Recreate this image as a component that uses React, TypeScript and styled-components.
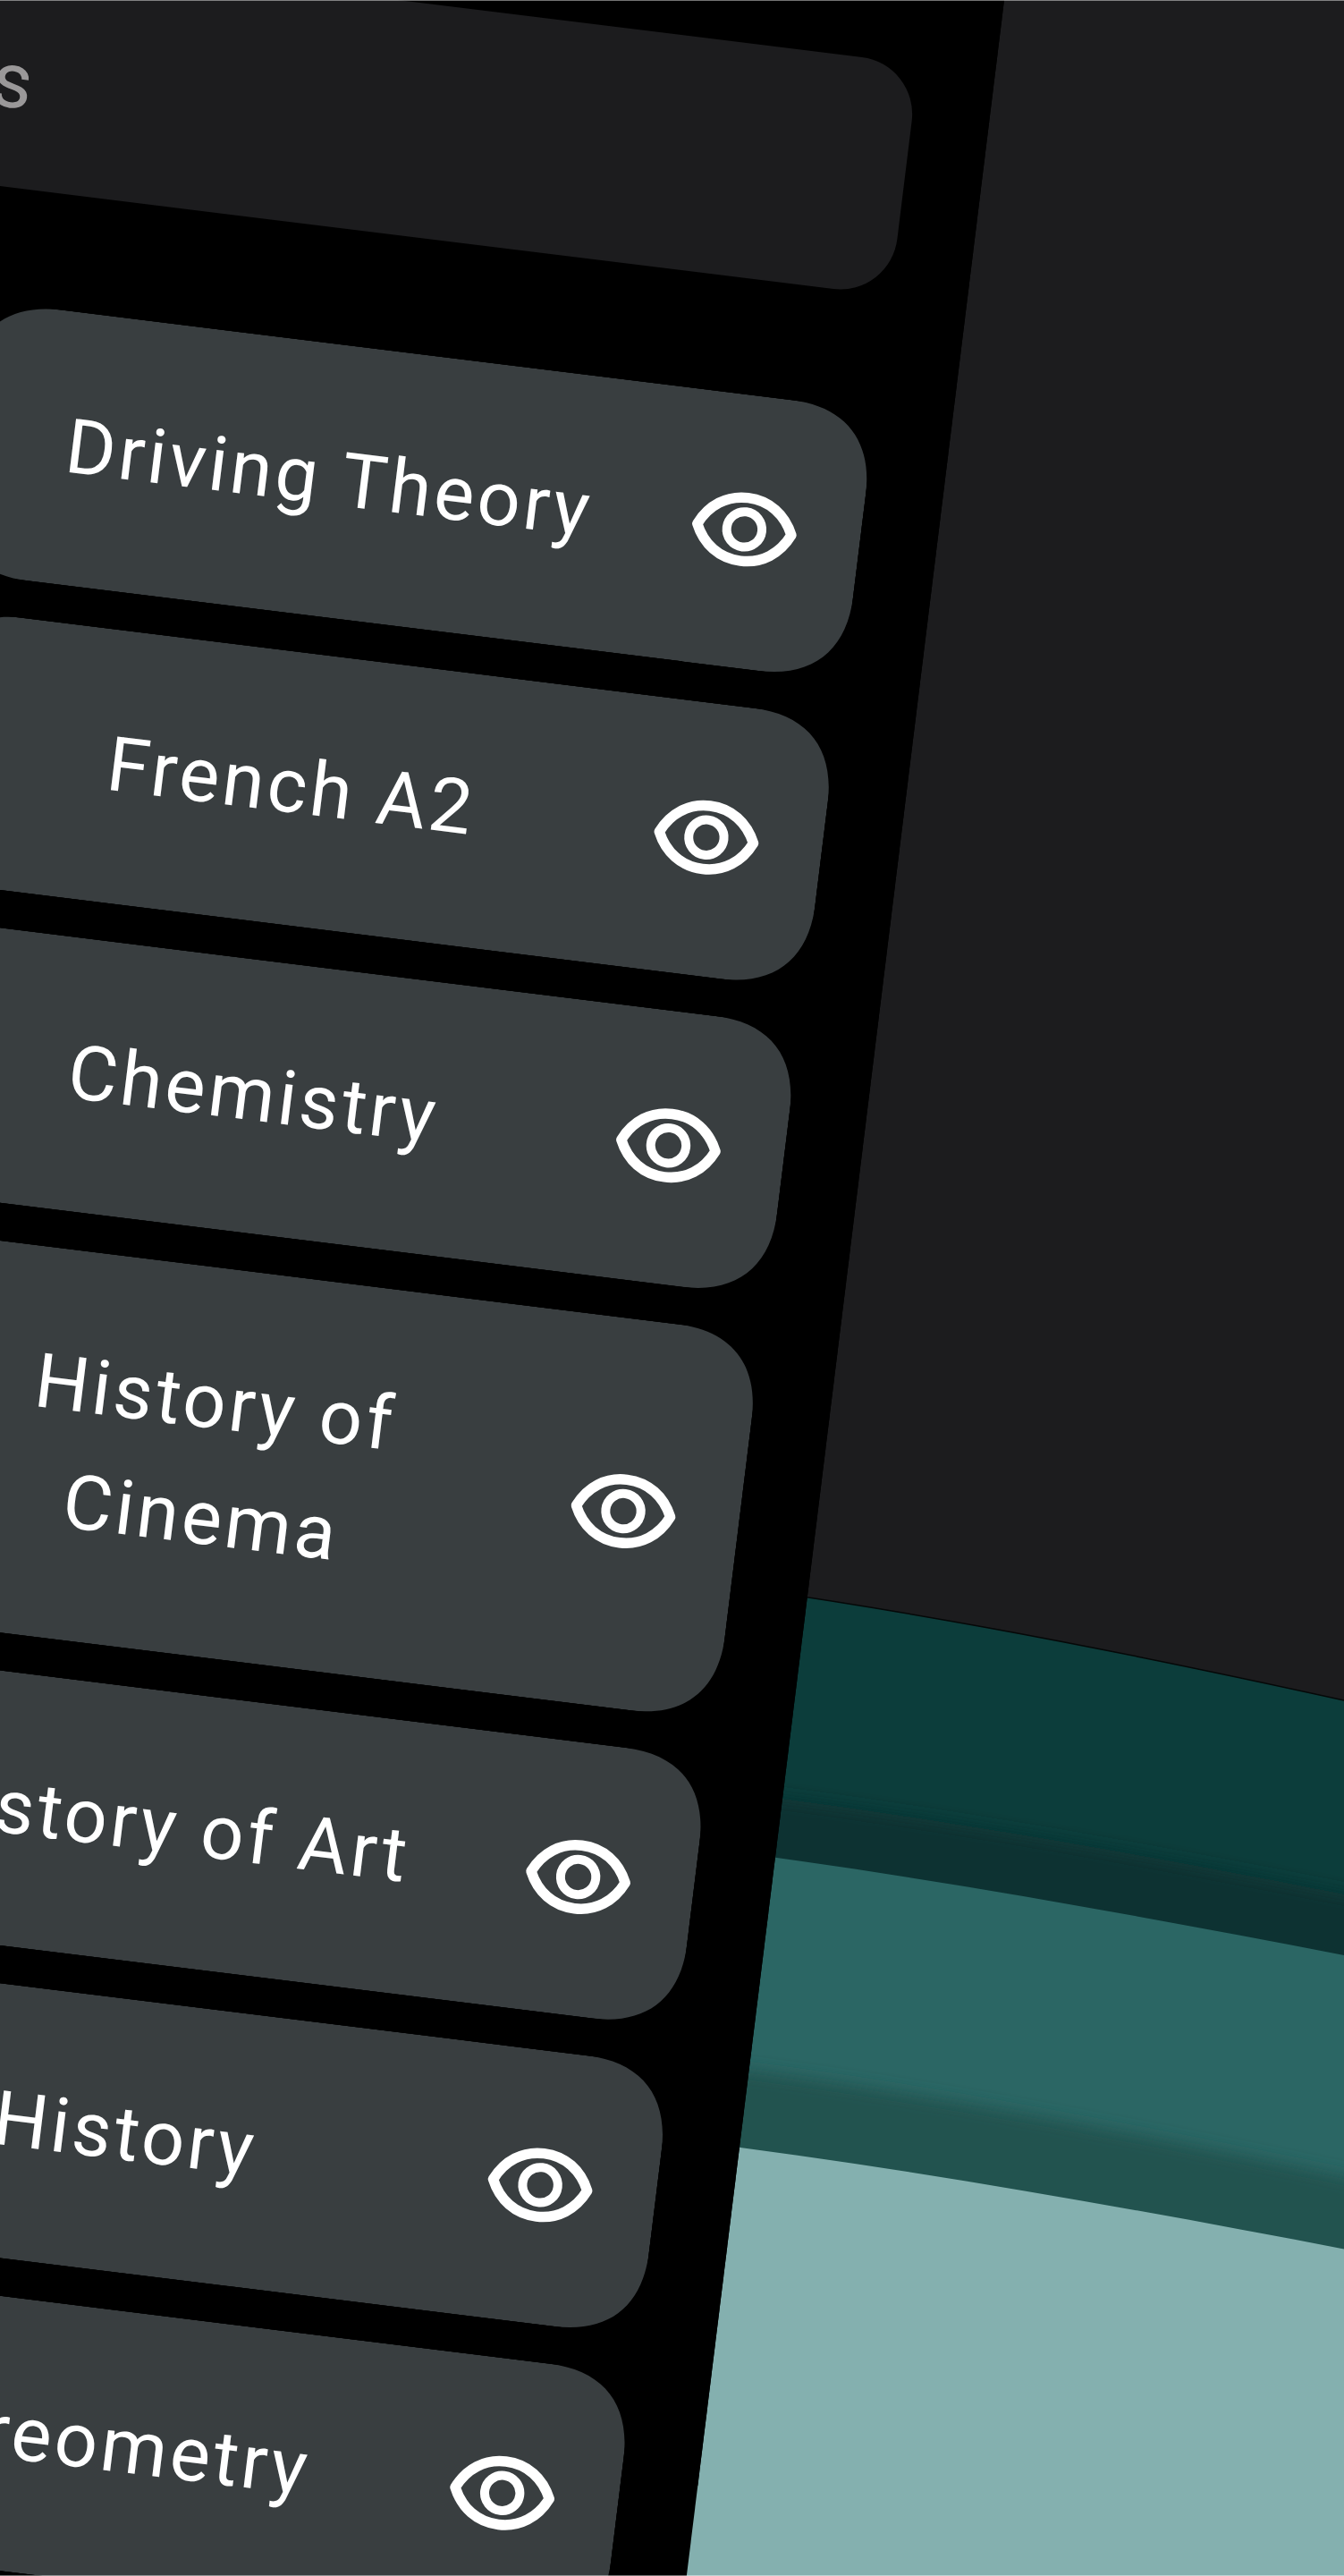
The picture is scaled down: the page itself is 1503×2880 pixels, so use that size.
import React from "react";
import styled, { createGlobalStyle } from "styled-components";

const GlobalStyle = createGlobalStyle`
  * {
    box-sizing: border-box;
  }
  body {
    margin: 0;
    background-color: #1c1c1e;
  }
`;

const Screen = styled.div`
  position: relative;
  width: 1503px;
  height: 2880px;
  overflow: hidden;
  background-color: #1c1c1e;
  font-family: Roboto, "Noto Sans", sans-serif;

  &::after {
    content: "";
    position: absolute;
    inset: 0;
    border: solid rgba(255, 255, 255, 0.45);
    border-width: 1px 0;
  }
`;

const Waves = styled.svg`
  position: absolute;
  top: 0;
  left: 0;
`;

// the phone mockup is tilted, everything inside is laid out straight
const Phone = styled.div`
  position: absolute;
  top: 0;
  right: 380px;
  width: 1240px;
  height: 3200px;
  padding: 83px 86px 0 0;
  display: flex;
  flex-direction: column;
  align-items: flex-end;
  background-color: #000000;
  transform: rotate(7.03deg);
  transform-origin: 100% 0;
  box-shadow: 0 -400px 0 #000000;
`;

const SearchField = styled.div`
  display: flex;
  align-items: center;
  width: 1100px;
  height: 261px;
  flex-shrink: 0;
  margin-bottom: 129px;
  padding: 22px 0 0 0;
  border-radius: 64px;
  background-color: #1c1c1e;
`;

const Placeholder = styled.span`
  width: 119px;
  display: flex;
  justify-content: flex-end;
  white-space: nowrap;
  font-size: 87px;
  color: #9a9899;
`;

const List = styled.div`
  display: flex;
  flex-direction: column;
  gap: 42px;
`;

const CardShape = styled.div<{ $tall?: boolean }>`
  display: flex;
  align-items: center;
  justify-content: space-between;
  flex-shrink: 0;
  width: 1013px;
  height: ${({ $tall }) => ($tall ? 435 : 305)}px;
  padding: 0 71px 6px 65px;
  background-color: #393e40;
`;

const Label = styled.div`
  width: 701px;
  text-align: center;
  font-size: 85px;
  line-height: 130px;
  letter-spacing: 3.6px;
  color: #ffffff;
`;

const EyeIcon = styled.svg`
  width: 118px;
  height: 82px;
  flex-shrink: 0;
  overflow: visible;
`;

// rounded rectangle with smoothed corners
const squircle = (w: number, h: number, r: number) => {
  const a = r * 0.36;
  return [
    `M${r} 0H${w - r}C${w - a} 0 ${w} ${a} ${w} ${r}`,
    `V${h - r}C${w} ${h - a} ${w - a} ${h} ${w - r} ${h}`,
    `H${r}C${a} ${h} 0 ${h - a} 0 ${h - r}`,
    `V${r}C0 ${a} ${a} 0 ${r} 0Z`,
  ].join("");
};

type SubjectCardProps = {
  name: string;
  tall?: boolean;
};

function SubjectCard({ name, tall }: SubjectCardProps) {
  return (
    <CardShape
      $tall={tall}
      style={{ clipPath: `path("${squircle(1013, tall ? 435 : 305, 95)}")` }}
    >
      <Label>{name}</Label>
      <EyeIcon viewBox="0 0 118 82" fill="none" stroke="#ffffff">
        <path
          d="M6 41C16 19 35 5.5 59 5.5S102 19 112 41C102 63 83 76.5 59 76.5S16 63 6 41Z"
          strokeWidth="11.5"
          strokeLinejoin="round"
        />
        <circle cx="59" cy="41" r="19.7" strokeWidth="10" />
      </EyeIcon>
    </CardShape>
  );
}

const subjects: SubjectCardProps[] = [
  { name: "Driving Theory" },
  { name: "French A2" },
  { name: "Chemistry" },
  { name: "History of Cinema", tall: true },
  { name: "History of Art" },
  { name: "History" },
  { name: "Stereometry" },
];

const EDGE_BACK = "M700 1758C970 1790 1240 1843 1503 1901";
const EDGE_MIDDLE = "M700 2055C970 2087 1240 2135 1503 2186";
const EDGE_FRONT = "M700 2385C970 2416 1240 2464 1503 2514.5";
const CLOSE = "V2900H700Z";

export default function App() {
  return (
    <>
      <GlobalStyle />
      <Screen>
        <Waves width="1503" height="2880" viewBox="0 0 1503 2880">
          <defs>
            <filter id="soft" x="-10%" y="-10%" width="120%" height="120%">
              <feGaussianBlur stdDeviation="9" />
            </filter>
            <clipPath id="back">
              <path d={EDGE_BACK + CLOSE} />
            </clipPath>
            <clipPath id="middle">
              <path d={EDGE_MIDDLE + CLOSE} />
            </clipPath>
          </defs>
          <path d={EDGE_BACK + CLOSE} fill="#0c3d3b" />
          <path d={EDGE_BACK} fill="none" stroke="#050808" strokeWidth="1.5" />
          <g clipPath="url(#back)">
            <path
              d="M700 1990C970 2019 1240 2064 1600 2137V2950H700Z"
              fill="#0a3230"
              filter="url(#soft)"
            />
          </g>
          <path d={EDGE_MIDDLE + CLOSE} fill="#2b6664" />
          <g clipPath="url(#middle)">
            <path
              d="M700 2299C970 2327 1240 2377 1600 2454V2950H700Z"
              fill="#245350"
              filter="url(#soft)"
            />
          </g>
          <path d={EDGE_FRONT + CLOSE} fill="#84b0af" />
        </Waves>
        <Phone>
          <SearchField>
            <Placeholder>Subjects</Placeholder>
          </SearchField>
          <List>
            {subjects.map((subject) => (
              <SubjectCard key={subject.name} {...subject} />
            ))}
          </List>
        </Phone>
      </Screen>
    </>
  );
}
